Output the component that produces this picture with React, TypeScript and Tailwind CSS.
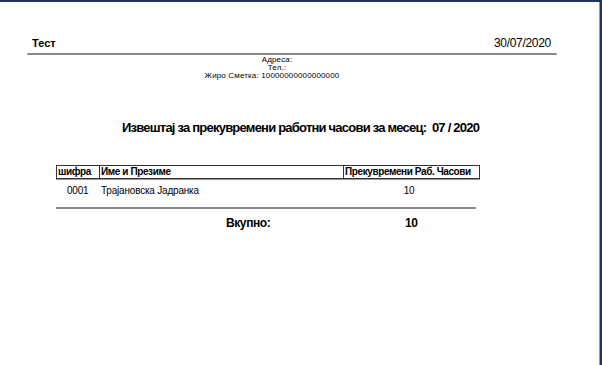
import React from "react";

type Row = { code: string; name: string; hours: number };

const rows: Row[] = [{ code: "0001", name: "Трајановска Јадранка", hours: 10 }];

const font = { fontFamily: '"Liberation Sans", Arial, sans-serif' };

export default function App() {
  const total = rows.reduce((sum, r) => sum + r.hours, 0);

  return (
    <div
      className="w-[602px] h-[365px] bg-white border-t-2 border-r-2 border-[#1b3560] overflow-hidden"
      style={font}
    >
      <div className="h-full border-r border-[#9a9a9a] text-black">
        {/* report header */}
        <div className="flex items-end justify-between pl-[32px] pr-[48px] pt-[35px]">
          <span className="text-[11px] font-bold leading-[13px]">Тест</span>
          <span className="text-[12px] leading-[13px] tracking-[-0.3px]">30/07/2020</span>
        </div>
        <div className="ml-[27px] w-[530px] h-[2px] mt-[3px] bg-[#8a8a8a] rounded-full" />

        {/* company info */}
        <div className="ml-[102px] w-[340px] flex flex-col items-center text-[8px] leading-[8px] tracking-[0.15px] mt-[1px]">
          <span className="pl-[10px]">Адреса:</span>
          <span className="pl-[10px]">Тел.:</span>
          <span>Жиро Сметка: 10000000000000000</span>
        </div>

        {/* title */}
        <div className="mt-[40px] ml-[122px] text-[13px] font-bold leading-[16px] tracking-[-0.78px]">
          Извештај за прекувремени работни часови за месец:&nbsp; 07 / 2020
        </div>

        {/* table */}
        <div className="ml-[56px] w-[424px] mt-[29px]">
          <div className="flex border border-[#333] shadow-[0_1px_0_#999] text-[10px] font-bold leading-[12px] tracking-[-0.4px]">
            <div className="w-[43px] px-[1px] border-r border-[#333]">шифра</div>
            <div className="w-[244px] px-[1px] border-r border-[#333]">Име и Презиме</div>
            <div className="flex-1 px-[1px]">Прекувремени Раб. Часови</div>
          </div>
          {rows.map((r) => (
            <div key={r.code} className="flex text-[10px] leading-[12px] mt-[6px] tracking-[-0.2px]">
              <div className="w-[45px] pl-[11px]">{r.code}</div>
              <div className="w-[242px]">{r.name}</div>
              <div className="w-[132px] text-center">{r.hours}</div>
            </div>
          ))}
          <div className="w-[420px] h-[2px] mt-[10px] bg-[#8a8a8a]" />
          <div className="flex text-[12px] font-bold leading-[14px] mt-[7px] tracking-[-0.4px]">
            <div className="ml-[170px] w-[179px]">Вкупно:</div>
            <div className="w-[10px] text-center">{total}</div>
          </div>
        </div>
      </div>
    </div>
  );
}
